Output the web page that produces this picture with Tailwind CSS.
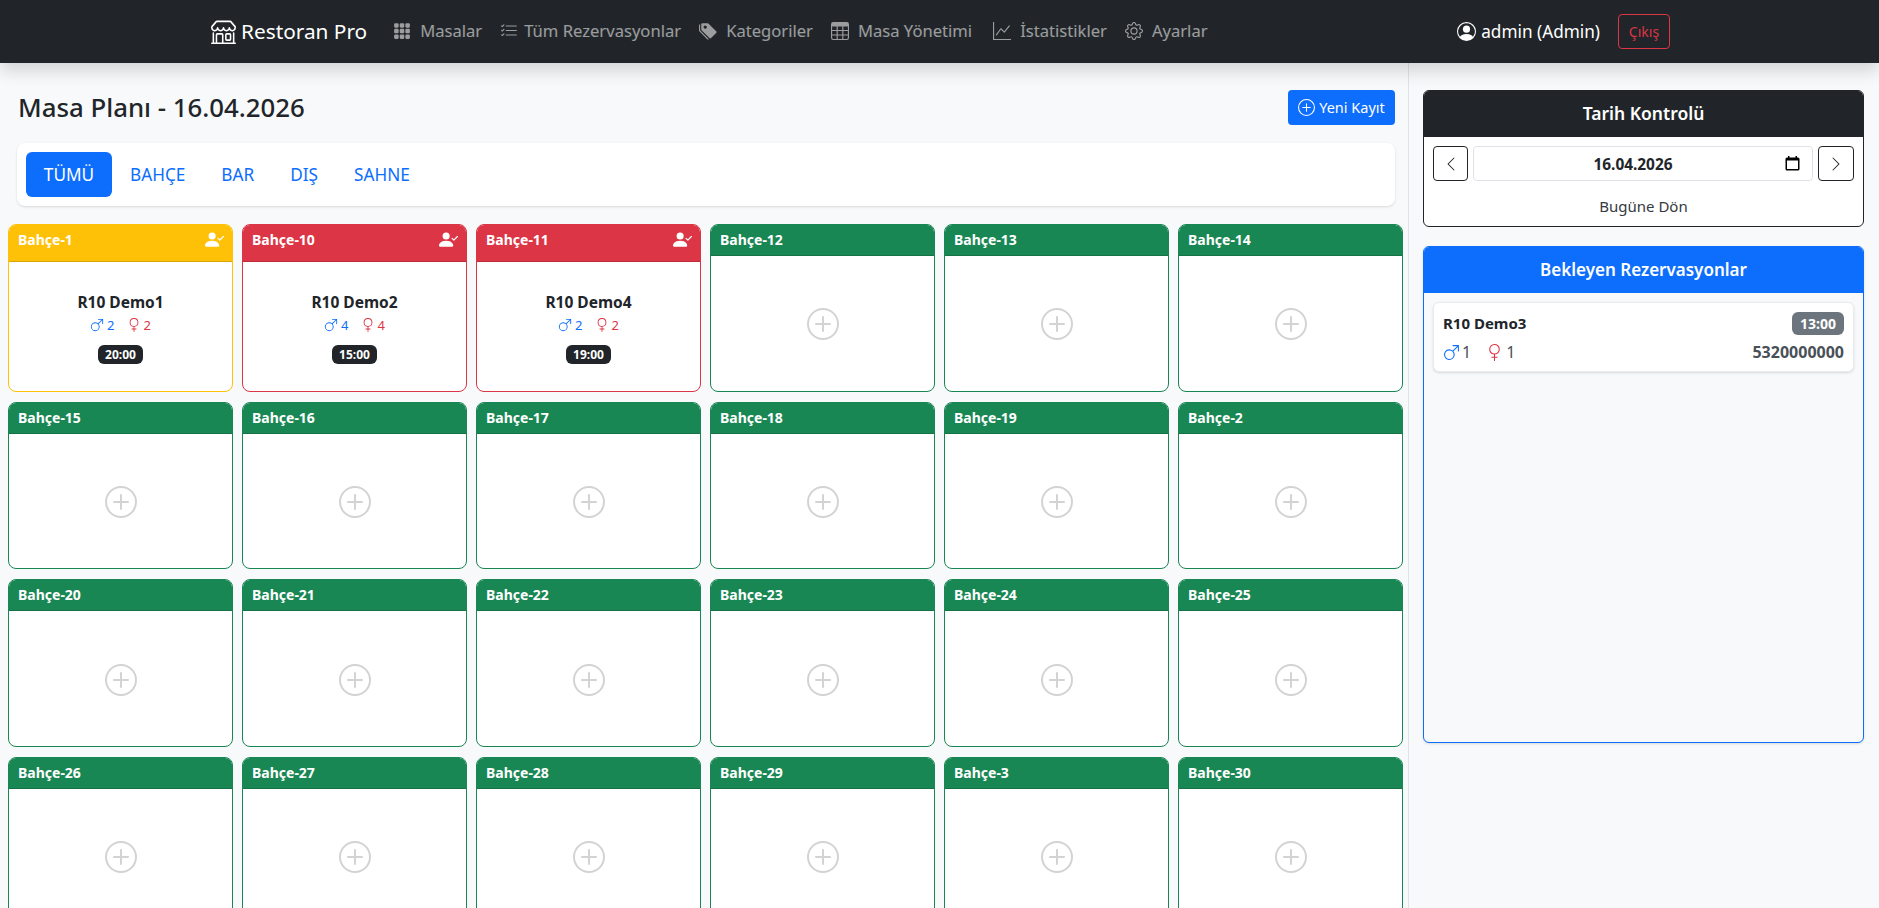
<!DOCTYPE html>
<html lang="tr">

<head>
    <meta charset="UTF-8">
    <meta name="viewport" content="width=device-width, initial-scale=1.0">
    <script src="https://cdn.jsdelivr.net/npm/@tailwindcss/browser@4"></script>
    <title>Restoran Pro</title>
</head>

<body class="h-screen overflow-hidden bg-[#f8f9fa] text-[#212529] font-['Noto_Sans',sans-serif]">

    <!-- Icons -->
    <svg class="hidden">
        <symbol id="i-shop" viewBox="0 0 16 16"><path d="M2.97 1.35A1 1 0 0 1 3.73 1h8.54a1 1 0 0 1 .76.35l2.609 3.044A1.5 1.5 0 0 1 16 5.37v.255a2.375 2.375 0 0 1-4.25 1.458A2.37 2.37 0 0 1 9.875 8 2.37 2.37 0 0 1 8 7.083 2.37 2.37 0 0 1 6.125 8a2.37 2.37 0 0 1-1.875-.917A2.375 2.375 0 0 1 0 5.625V5.37a1.5 1.5 0 0 1 .361-.976zm1.78 4.275a1.375 1.375 0 0 0 2.75 0 .5.5 0 0 1 1 0 1.375 1.375 0 0 0 2.75 0 .5.5 0 0 1 1 0 1.375 1.375 0 1 0 2.75 0V5.37a.5.5 0 0 0-.12-.325L12.27 2H3.73L1.12 5.045A.5.5 0 0 0 1 5.37v.255a1.375 1.375 0 0 0 2.75 0 .5.5 0 0 1 1 0M1.5 8.5A.5.5 0 0 1 2 9v6h1v-5a1 1 0 0 1 1-1h3a1 1 0 0 1 1 1v5h6V9a.5.5 0 0 1 1 0v6h.5a.5.5 0 0 1 0 1H.5a.5.5 0 0 1 0-1H1V9a.5.5 0 0 1 .5-.5M4 15h3v-5H4zm5-5a1 1 0 0 1 1-1h2a1 1 0 0 1 1 1v3a1 1 0 0 1-1 1h-2a1 1 0 0 1-1-1zm3 0h-2v3h2z"/></symbol>
        <symbol id="i-grid" viewBox="0 0 16 16"><path d="M1 2a1 1 0 0 1 1-1h2a1 1 0 0 1 1 1v2a1 1 0 0 1-1 1H2a1 1 0 0 1-1-1zm5 0a1 1 0 0 1 1-1h2a1 1 0 0 1 1 1v2a1 1 0 0 1-1 1H7a1 1 0 0 1-1-1zm5 0a1 1 0 0 1 1-1h2a1 1 0 0 1 1 1v2a1 1 0 0 1-1 1h-2a1 1 0 0 1-1-1zM1 7a1 1 0 0 1 1-1h2a1 1 0 0 1 1 1v2a1 1 0 0 1-1 1H2a1 1 0 0 1-1-1zm5 0a1 1 0 0 1 1-1h2a1 1 0 0 1 1 1v2a1 1 0 0 1-1 1H7a1 1 0 0 1-1-1zm5 0a1 1 0 0 1 1-1h2a1 1 0 0 1 1 1v2a1 1 0 0 1-1 1h-2a1 1 0 0 1-1-1zM1 12a1 1 0 0 1 1-1h2a1 1 0 0 1 1 1v2a1 1 0 0 1-1 1H2a1 1 0 0 1-1-1zm5 0a1 1 0 0 1 1-1h2a1 1 0 0 1 1 1v2a1 1 0 0 1-1 1H7a1 1 0 0 1-1-1zm5 0a1 1 0 0 1 1-1h2a1 1 0 0 1 1 1v2a1 1 0 0 1-1 1h-2a1 1 0 0 1-1-1z"/></symbol>
        <symbol id="i-list" viewBox="0 0 16 16"><path fill-rule="evenodd" d="M5 11.5a.5.5 0 0 1 .5-.5h9a.5.5 0 0 1 0 1h-9a.5.5 0 0 1-.5-.5m0-4a.5.5 0 0 1 .5-.5h9a.5.5 0 0 1 0 1h-9a.5.5 0 0 1-.5-.5m0-4a.5.5 0 0 1 .5-.5h9a.5.5 0 0 1 0 1h-9a.5.5 0 0 1-.5-.5M3.854 2.146a.5.5 0 0 1 0 .708l-1.5 1.5a.5.5 0 0 1-.708 0l-.5-.5a.5.5 0 1 1 .708-.708L2 3.293l1.146-1.147a.5.5 0 0 1 .708 0m0 4a.5.5 0 0 1 0 .708l-1.5 1.5a.5.5 0 0 1-.708 0l-.5-.5a.5.5 0 1 1 .708-.708L2 7.293l1.146-1.147a.5.5 0 0 1 .708 0m0 4a.5.5 0 0 1 0 .708l-1.5 1.5a.5.5 0 0 1-.708 0l-.5-.5a.5.5 0 0 1 .708-.708l.146.147 1.146-1.147a.5.5 0 0 1 .708 0"/></symbol>
        <symbol id="i-tags" viewBox="0 0 16 16"><path d="M2 2a1 1 0 0 1 1-1h4.586a1 1 0 0 1 .707.293l7 7a1 1 0 0 1 0 1.414l-4.586 4.586a1 1 0 0 1-1.414 0l-7-7A1 1 0 0 1 2 6.586zm3.5 4a1.5 1.5 0 1 0 0-3 1.5 1.5 0 0 0 0 3"/><path d="M1.293 7.793A1 1 0 0 1 1 7.086V2a1 1 0 0 0-1 1v4.586a1 1 0 0 0 .293.707l7 7a1 1 0 0 0 1.414 0l.043-.043z"/></symbol>
        <symbol id="i-table" viewBox="0 0 16 16"><path d="M0 2a2 2 0 0 1 2-2h12a2 2 0 0 1 2 2v12a2 2 0 0 1-2 2H2a2 2 0 0 1-2-2zm15 2h-4v3h4zm0 4h-4v3h4zm0 4h-4v3h3a1 1 0 0 0 1-1zm-5 3v-3H6v3zm-5 0v-3H1v2a1 1 0 0 0 1 1zm-4-4h4V8H1zm0-4h4V4H1zm5-3v3h4V4zm4 4H6v3h4z"/></symbol>
        <symbol id="i-graph" viewBox="0 0 16 16"><path fill-rule="evenodd" d="M0 0h1v15h15v1H0zm14.817 3.113a.5.5 0 0 1 .07.704l-4.5 5.5a.5.5 0 0 1-.74.037L7.06 6.767l-3.656 5.027a.5.5 0 0 1-.808-.588l4-5.5a.5.5 0 0 1 .758-.06l2.609 2.61 4.15-5.073a.5.5 0 0 1 .704-.07"/></symbol>
        <symbol id="i-gear" viewBox="0 0 16 16"><path d="M8 4.754a3.246 3.246 0 1 0 0 6.492 3.246 3.246 0 0 0 0-6.492M5.754 8a2.246 2.246 0 1 1 4.492 0 2.246 2.246 0 0 1-4.492 0"/><path d="M9.796 1.343c-.527-1.79-3.065-1.79-3.592 0l-.094.319a.873.873 0 0 1-1.255.52l-.292-.16c-1.64-.892-3.433.902-2.54 2.541l.159.292a.873.873 0 0 1-.52 1.255l-.319.094c-1.79.527-1.79 3.065 0 3.592l.319.094a.873.873 0 0 1 .52 1.255l-.16.292c-.892 1.64.901 3.434 2.541 2.54l.292-.159a.873.873 0 0 1 1.255.52l.094.319c.527 1.79 3.065 1.79 3.592 0l.094-.319a.873.873 0 0 1 1.255-.52l.292.16c1.64.893 3.434-.902 2.54-2.541l-.159-.292a.873.873 0 0 1 .52-1.255l.319-.094c1.79-.527 1.79-3.065 0-3.592l-.319-.094a.873.873 0 0 1-.52-1.255l.16-.292c.893-1.64-.902-3.433-2.541-2.54l-.292.159a.873.873 0 0 1-1.255-.52zm-2.633.283c.246-.835 1.428-.835 1.674 0l.094.319a1.873 1.873 0 0 0 2.693 1.115l.291-.16c.764-.415 1.6.42 1.184 1.185l-.159.292a1.873 1.873 0 0 0 1.116 2.692l.318.094c.835.246.835 1.428 0 1.674l-.319.094a1.873 1.873 0 0 0-1.115 2.693l.16.291c.415.764-.42 1.6-1.185 1.184l-.291-.159a1.873 1.873 0 0 0-2.693 1.116l-.094.318c-.246.835-1.428.835-1.674 0l-.094-.319a1.873 1.873 0 0 0-2.692-1.115l-.292.16c-.764.415-1.6-.42-1.184-1.185l.159-.291A1.873 1.873 0 0 0 1.945 8.93l-.319-.094c-.835-.246-.835-1.428 0-1.674l.319-.094A1.873 1.873 0 0 0 3.06 4.377l-.16-.292c-.415-.764.42-1.6 1.185-1.184l.292.159a1.873 1.873 0 0 0 2.692-1.115z"/></symbol>
        <symbol id="i-person" viewBox="0 0 16 16"><path d="M11 6a3 3 0 1 1-6 0 3 3 0 0 1 6 0"/><path fill-rule="evenodd" d="M0 8a8 8 0 1 1 16 0A8 8 0 0 1 0 8m8-7a7 7 0 0 0-5.468 11.37C3.242 11.226 4.805 10 8 10s4.757 1.225 5.468 2.37A7 7 0 0 0 8 1"/></symbol>
        <symbol id="i-plus" viewBox="0 0 16 16"><path d="M8 15A7 7 0 1 1 8 1a7 7 0 0 1 0 14m0 1A8 8 0 1 0 8 0a8 8 0 0 0 0 16"/><path d="M8 4a.5.5 0 0 1 .5.5v3h3a.5.5 0 0 1 0 1h-3v3a.5.5 0 0 1-1 0v-3h-3a.5.5 0 0 1 0-1h3v-3A.5.5 0 0 1 8 4"/></symbol>
        <symbol id="i-check" viewBox="0 0 16 16"><path fill-rule="evenodd" d="M15.854 5.146a.5.5 0 0 1 0 .708l-3 3a.5.5 0 0 1-.708 0l-1.5-1.5a.5.5 0 0 1 .708-.708L12.5 7.793l2.646-2.647a.5.5 0 0 1 .708 0"/><path d="M1 14s-1 0-1-1 1-4 6-4 6 3 6 4-1 1-1 1zm5-6a3 3 0 1 0 0-6 3 3 0 0 0 0 6"/></symbol>
        <symbol id="i-male" viewBox="0 0 16 16"><path fill-rule="evenodd" d="M9.5 2a.5.5 0 0 1 0-1h5a.5.5 0 0 1 .5.5v5a.5.5 0 0 1-1 0V2.707L9.871 6.836a5 5 0 1 1-.707-.707L13.293 2zM6 6a4 4 0 1 0 0 8 4 4 0 0 0 0-8"/></symbol>
        <symbol id="i-female" viewBox="0 0 16 16"><path fill-rule="evenodd" d="M8 1a4 4 0 1 0 0 8 4 4 0 0 0 0-8M3 5a5 5 0 1 1 5.5 4.975V12h2a.5.5 0 0 1 0 1h-2v2.5a.5.5 0 0 1-1 0V13h-2a.5.5 0 0 1 0-1h2V9.975A5 5 0 0 1 3 5"/></symbol>
        <symbol id="i-left" viewBox="0 0 16 16"><path fill-rule="evenodd" d="M11.354 1.646a.5.5 0 0 1 0 .708L5.707 8l5.647 5.646a.5.5 0 0 1-.708.708l-6-6a.5.5 0 0 1 0-.708l6-6a.5.5 0 0 1 .708 0"/></symbol>
        <symbol id="i-right" viewBox="0 0 16 16"><path fill-rule="evenodd" d="M4.646 1.646a.5.5 0 0 1 .708 0l6 6a.5.5 0 0 1 0 .708l-6 6a.5.5 0 0 1-.708-.708L10.293 8 4.646 2.354a.5.5 0 0 1 0-.708"/></symbol>
    </svg>

    <!-- Navbar -->
    <nav class="relative z-10 flex items-center h-[63px] pl-[211px] pr-[209px] bg-[#212529] shadow-[0_8px_16px_rgba(0,0,0,0.15)]">
        <a class="flex items-center gap-[5px] text-[20.8px] text-white mr-[26px]">
            <svg class="w-[25px] h-[25px] fill-current"><use href="#i-shop"></use></svg>
            <span>Restoran Pro</span>
        </a>
        <div class="flex items-center gap-[18px] text-[16.6px] text-white/55">
            <a class="flex items-center gap-[9px]"><svg class="w-[18px] h-[18px] fill-current"><use href="#i-grid"></use></svg>Masalar</a>
            <a class="flex items-center gap-[6px]"><svg class="w-[18px] h-[18px] fill-current"><use href="#i-list"></use></svg>Tüm Rezervasyonlar</a>
            <a class="flex items-center gap-[9px]"><svg class="w-[18px] h-[18px] fill-current"><use href="#i-tags"></use></svg>Kategoriler</a>
            <a class="flex items-center gap-[9px]"><svg class="w-[18px] h-[18px] fill-current"><use href="#i-table"></use></svg>Masa Yönetimi</a>
            <a class="ml-[3px] flex items-center gap-[9px]"><svg class="w-[18px] h-[18px] fill-current"><use href="#i-graph"></use></svg>İstatistikler</a>
            <a class="flex items-center gap-[9px]"><svg class="w-[18px] h-[18px] fill-current"><use href="#i-gear"></use></svg>Ayarlar</a>
        </div>
        <div class="ml-auto flex items-center gap-[5px] text-[17.2px] text-white">
            <svg class="w-[19px] h-[19px] fill-current"><use href="#i-person"></use></svg>
            <span>admin (Admin)</span>
            <button class="ml-[13px] w-[52px] h-[35px] border border-[#dc3545] rounded text-[14px] text-[#dc3545]">Çıkış</button>
        </div>
    </nav>

    <div class="flex h-[845px]">
        <!-- Masa plani -->
        <main class="w-[1408px] shrink-0 pt-[27px] pl-[8px] pr-[5px]">
            <div class="flex items-center justify-between h-[35px] pl-[10px] mr-[8px]">
                <h1 class="text-[25.8px] font-medium leading-none">Masa Planı - 16.04.2026</h1>
                <button class="flex items-center gap-[4px] w-[107px] h-[35px] justify-center bg-[#0d6efd] rounded text-[14.5px] text-white">
                    <svg class="w-[17px] h-[17px] fill-current"><use href="#i-plus"></use></svg>Yeni Kayıt
                </button>
            </div>
            <div class="flex items-center h-[63px] mt-[18px] ml-[9px] mr-[8px] px-[9px] bg-white rounded-lg shadow-sm">
                <a class="flex items-center justify-center w-[86px] h-[45px] bg-[#0d6efd] rounded-md text-white text-[17.2px]">TÜMÜ</a>
                <a class="px-[18px] text-[17.2px] text-[#0d6efd]">BAHÇE</a>
                <a class="px-[18px] text-[17.2px] text-[#0d6efd]">BAR</a>
                <a class="px-[18px] text-[17.2px] text-[#0d6efd]">DIŞ</a>
                <a class="px-[18px] text-[17.2px] text-[#0d6efd]">SAHNE</a>
            </div>
            <div id="grid" class="grid grid-cols-6 gap-x-[9px] gap-y-[10px] mt-[18px]"></div>
        </main>

        <!-- Yan panel -->
        <aside class="flex-1 border-l border-[#dee2e6] pt-[27px] pl-[14px] pr-[15px]">
            <section class="h-[137px] border border-[#212529] rounded-md bg-white overflow-hidden">
                <h2 class="flex items-center justify-center h-[46px] pb-[2px] bg-[#212529] text-white text-[17.5px] font-semibold">Tarih Kontrolü</h2>
                <div class="flex items-center gap-[5px] mt-[9px] px-[9px]">
                    <button class="flex items-center justify-center w-[35px] h-[35px] border border-[#212529] rounded"><svg class="w-[16px] h-[16px] fill-current"><use href="#i-left"></use></svg></button>
                    <div class="relative flex-1 flex items-center justify-center h-[35px] pt-[2px] pr-[20px] border border-[#dee2e6] rounded text-[15.4px] font-bold">
                        16.04.2026
                        <svg class="absolute right-[12px] top-[9px] w-[15px] h-[15px] fill-black" viewBox="0 0 15 15"><path fill-rule="evenodd" d="M3 0h1.5v1.5h6V0H12v1.500h1a1.500 1.500 0 0 1 1.500 1.500v10a1.500 1.500 0 0 1-1.500 1.500H2A1.500 1.500 0 0 1 .5 13V3A1.500 1.500 0 0 1 2 1.500h1zM2 4.500V13h11V4.500z"/></svg>
                    </div>
                    <button class="flex items-center justify-center w-[36px] h-[35px] border border-[#212529] rounded"><svg class="w-[16px] h-[16px] fill-current"><use href="#i-right"></use></svg></button>
                </div>
                <p class="mt-[14px] text-center text-[15px] text-[#343a40]">Bugüne Dön</p>
            </section>

            <section class="h-[497px] mt-[19px] border border-[#0d6efd] rounded-md bg-[#f8f9fa] shadow-sm overflow-hidden">
                <h2 class="flex items-center justify-center h-[46px] bg-[#0d6efd] text-white text-[17px] font-semibold">Bekleyen Rezervasyonlar</h2>
                <div class="h-[70px] mt-[9px] mx-[9px] px-[9px] pt-[9px] bg-white border border-[#e9ecef] rounded-md shadow-sm">
                    <div class="flex items-center justify-between h-[23px]">
                        <span class="text-[15px] font-bold">R10 Demo3</span>
                        <span class="flex items-center justify-center w-[52px] h-[23px] bg-[#6c757d] rounded-md text-white text-[14px] font-bold">13:00</span>
                    </div>
                    <div class="flex items-center justify-between mt-[5px] text-[16px]">
                        <div class="flex items-center text-[#495057]">
                            <svg class="w-[17px] h-[17px] fill-[#0d6efd]"><use href="#i-male"></use></svg><span class="ml-[2px]">1</span>
                            <svg class="ml-[15px] w-[17px] h-[17px] fill-[#dc3545]"><use href="#i-female"></use></svg><span class="ml-[3px]">1</span>
                        </div>
                        <span class="font-bold text-[#495057]">5320000000</span>
                    </div>
                </div>
            </section>
        </aside>
    </div>

    <script>
        const occupied = {
            'Bahçe-1': { name: 'R10 Demo1', m: 2, f: 2, time: '20:00', border: 'border-[#ffc107]', head: 'bg-[#ffc107]' },
            'Bahçe-10': { name: 'R10 Demo2', m: 4, f: 4, time: '15:00', border: 'border-[#dc3545]', head: 'bg-[#dc3545]' },
            'Bahçe-11': { name: 'R10 Demo4', m: 2, f: 2, time: '19:00', border: 'border-[#dc3545]', head: 'bg-[#dc3545]' },
        };
        const tables = [1, 10, 11, 12, 13, 14, 15, 16, 17, 18, 19, 2, 20, 21, 22, 23, 24, 25, 26, 27, 28, 29, 3, 30];

        document.getElementById('grid').innerHTML = tables.map((n) => {
            const title = `Bahçe-${n}`;
            const r = occupied[title];
            if (!r) {
                return `<div class="h-[167.67px] border border-[#198754] rounded-lg bg-white overflow-hidden flex flex-col">
                    <div class="flex items-center h-[31px] pb-[1px] px-[9px] bg-[#198754] border-b border-black/15 text-white text-[14px] font-bold">${title}</div>
                    <div class="flex-1 flex items-center justify-center pt-[2px]"><svg class="w-[32px] h-[32px] fill-[#d3d3d3]"><use href="#i-plus"></use></svg></div>
                </div>`;
            }
            return `<div class="h-[167.67px] border ${r.border} rounded-lg bg-white overflow-hidden flex flex-col">
                <div class="flex items-center justify-between h-[37px] pl-[9px] pr-[8px] pb-[7px] ${r.head} border-b border-black/15 text-white text-[14px] font-bold">${title}<svg class="w-[19px] h-[19px] fill-current"><use href="#i-check"></use></svg></div>
                <div class="flex-1 flex flex-col items-center justify-center pt-[5px]">
                    <div class="text-[15.5px] font-bold leading-[22px] -mt-[2px]">${r.name}</div>
                    <div class="flex items-center mt-[3px] text-[13px] leading-[18px]">
                        <svg class="w-[14px] h-[14px] fill-[#0d6efd]"><use href="#i-male"></use></svg><span class="ml-[3px] text-[#0d6efd]">${r.m}</span>
                        <svg class="ml-[12px] w-[14px] h-[14px] fill-[#dc3545]"><use href="#i-female"></use></svg><span class="ml-[3px] text-[#dc3545]">${r.f}</span>
                    </div>
                    <div class="flex items-center justify-center mt-[11px] w-[45px] h-[19px] bg-[#212529] rounded-md text-white text-[12px] font-bold">${r.time}</div>
                </div>
            </div>`;
        }).join('');
    </script>

</body>

</html>
